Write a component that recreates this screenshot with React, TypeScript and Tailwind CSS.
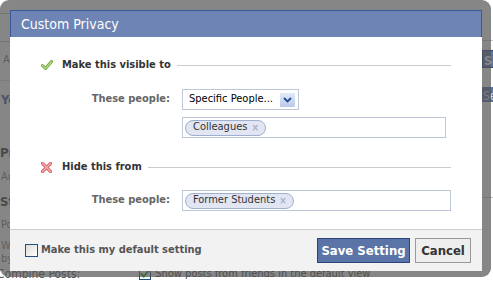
import React from "react";

const font = { fontFamily: '"DejaVu Sans Condensed", "DejaVu Sans", Tahoma, sans-serif' };

function Check() {
  return (
    <svg width="12" height="11" viewBox="0 0 12 11">
      <path d="M1.5 5.5 L4.5 8.5 L10.5 1.5" fill="none" stroke="#6fa33a" strokeWidth="3" strokeLinecap="round" strokeLinejoin="round" />
      <path d="M1.5 5.5 L4.5 8.5 L10.5 1.5" fill="none" stroke="#b4dc86" strokeWidth="1.2" strokeLinecap="round" strokeLinejoin="round" />
    </svg>
  );
}

function Cross() {
  return (
    <svg width="11" height="11" viewBox="0 0 11 11">
      <path d="M1.5 1.5 L9.5 9.5 M9.5 1.5 L1.5 9.5" fill="none" stroke="#d9676b" strokeWidth="3.2" strokeLinecap="round" />
      <path d="M1.5 1.5 L9.5 9.5 M9.5 1.5 L1.5 9.5" fill="none" stroke="#f3b0b2" strokeWidth="1.2" strokeLinecap="round" />
    </svg>
  );
}

function Token({ label }: { label: string }) {
  return (
    <span className="flex items-center h-[16px] pl-[7px] pr-[6px] rounded-full border border-[#9fafcf] bg-[#e2e6f2] text-[11px] text-[#333]">
      {label}
      <span className="ml-[4px] text-[10px] leading-none text-[#a7b1c6] font-bold">×</span>
    </span>
  );
}

function SectionHeader({ icon, title }: { icon: React.ReactNode; title: string }) {
  return (
    <div className="flex items-center h-[16px] pl-[31px] pr-[31px]">
      <div className="w-[21px] flex items-center">{icon}</div>
      <span className="text-[11px] font-bold text-[#333] whitespace-nowrap">{title}</span>
      <div className="flex-1 ml-[6px] h-px bg-[#cccccc]" />
    </div>
  );
}

function Row({ children }: { children: React.ReactNode }) {
  return (
    <div className="flex items-center">
      <div className="w-[172px] text-right text-[11px] font-bold text-[#666] pr-[12px]">These people:</div>
      {children}
    </div>
  );
}

function BackgroundPage() {
  return (
    <div className="w-[493px] h-[283px] bg-white text-[11px] text-[#333] flex" style={font}>
      <div className="w-[10px] shrink-0 overflow-hidden flex flex-col whitespace-nowrap">
        <div className="h-[13px] shrink-0" />
        <div className="h-[29px] shrink-0 border border-[#bbb] ml-[-4px] w-[150px]" />
        <div className="h-[36px] shrink-0 leading-[36px] pl-[3px] text-[#777]">Ac</div>
        <div className="h-[2px] shrink-0" />
        <div className="h-px shrink-0 bg-[#ddd]" />
        <div className="h-[38px] shrink-0 leading-[38px] pl-[1px] font-bold text-[#3b5998] text-[13px]">Yo</div>
        <div className="h-[24px] shrink-0" />
        <div className="h-[20px] shrink-0 leading-[20px] font-bold text-[#333] text-[13px]">Pr</div>
        <div className="h-[4px] shrink-0" />
        <div className="h-[20px] shrink-0 leading-[20px] pl-[1px] text-[#777]">Au</div>
        <div className="h-[5px] shrink-0" />
        <div className="h-[20px] shrink-0 leading-[20px] font-bold text-[#333] text-[13px]">St</div>
        <div className="h-[3px] shrink-0" />
        <div className="h-[20px] shrink-0 leading-[20px] pl-[1px] text-[#777]">Po</div>
        <div className="h-[4px] shrink-0" />
        <div className="h-[13px] shrink-0 leading-[13px] pl-[1px] text-[#777]">Wh</div>
        <div className="h-[13px] shrink-0 leading-[13px] pl-[1px] text-[#777]">by</div>
      </div>
      <div className="flex-1 min-w-0 flex flex-col">
        <div className="mt-[40px] h-px bg-[#ccc]" />
        <div className="mt-[9px] ml-[472px] h-[23px] w-[30px] bg-[#5b74a8] border border-[#29447e] text-white font-bold text-[12px] pl-[1px] leading-[21px] overflow-hidden">S</div>
        <div className="mt-[19px] ml-[472px] h-[19px] w-[30px] bg-[#5b74a8] text-[#dde] text-[12px] pl-[1px] leading-[19px] overflow-hidden">Se</div>
        <div className="mt-[95px] h-px bg-[#ccc]" />
        <div className="mt-[67px] ml-[-13px] flex items-center whitespace-nowrap">
          <span className="text-[12px] text-[#555]">Combine Posts:</span>
          <span className="ml-[59px] w-[12px] h-[12px] border border-[#1c5180] bg-white flex items-center justify-center">
            <svg width="10" height="9" viewBox="0 0 10 9"><path d="M1 4.5 L3.8 7.5 L9 1" fill="none" stroke="#21a121" strokeWidth="2" /></svg>
          </span>
          <span className="ml-[4px] text-[11px] text-[#444]">Show posts from friends in the default view</span>
        </div>
      </div>
    </div>
  );
}

export default function App() {
  return (
    <div className="relative w-[493px] h-[283px] overflow-hidden" style={font}>
      <BackgroundPage />
      <div className="absolute left-0 top-0 w-[491px] h-[277px] rounded-[9px] bg-[rgba(82,82,82,0.7)] pt-[10px] pl-[10px]">
        <div className="w-[472px] h-[261px] flex flex-col bg-white">
          <div className="h-[27px] bg-[#6d84b4] border border-b-0 border-[#3b5998] flex items-center pl-[10px]">
            <span className="text-white text-[14px]">Custom Privacy</span>
          </div>
          <div className="flex-1 flex flex-col pt-[20px]">
            <SectionHeader icon={<Check />} title="Make this visible to" />
            <div className="mt-[16px]">
              <Row>
                <div className="w-[117px] h-[21px] border border-[#bdc7d8] flex items-center pl-[6px] pr-[3px] justify-between">
                  <span className="text-[11px] text-black">Specific People...</span>
                  <span className="w-[15px] h-[14px] bg-gradient-to-b from-[#e3ebf9] to-[#b8c8ea] flex items-center justify-center rounded-[1px]">
                    <svg width="9" height="6" viewBox="0 0 9 6"><path d="M1 1 L4.5 4.5 L8 1" fill="none" stroke="#264a90" strokeWidth="1.8" /></svg>
                  </span>
                </div>
              </Row>
            </div>
            <div className="mt-[7px] ml-[172px] w-[264px] h-[21px] border border-[#bdc7d8] flex items-center pl-[2px]">
              <Token label="Colleagues" />
            </div>
            <div className="mt-[21px]">
              <SectionHeader icon={<Cross />} title="Hide this from" />
            </div>
            <div className="mt-[15px]">
              <Row>
                <div className="w-[269px] h-[21px] border border-[#bdc7d8] flex items-center pl-[2px]">
                  <Token label="Former Students" />
                </div>
              </Row>
            </div>
          </div>
          <div className="h-[42px] bg-[#f2f2f2] border-t border-[#cccccc] flex items-center pl-[15px] pr-[11px]">
            <span className="w-[13px] h-[13px] border border-[#1c5180] bg-gradient-to-br from-[#dcdcd7] to-white" />
            <span className="ml-[3px] text-[11px] font-bold text-[#555]">Make this my default setting</span>
            <div className="flex-1" />
            <button className="h-[25px] w-[93px] bg-[#5b74a8] border border-[#29447e] text-white font-bold text-[13px]">Save Setting</button>
            <button className="ml-[5px] h-[25px] w-[56px] bg-[#eeeeee] border border-[#999] text-[#333] font-bold text-[13px]">Cancel</button>
          </div>
        </div>
      </div>
    </div>
  );
}
